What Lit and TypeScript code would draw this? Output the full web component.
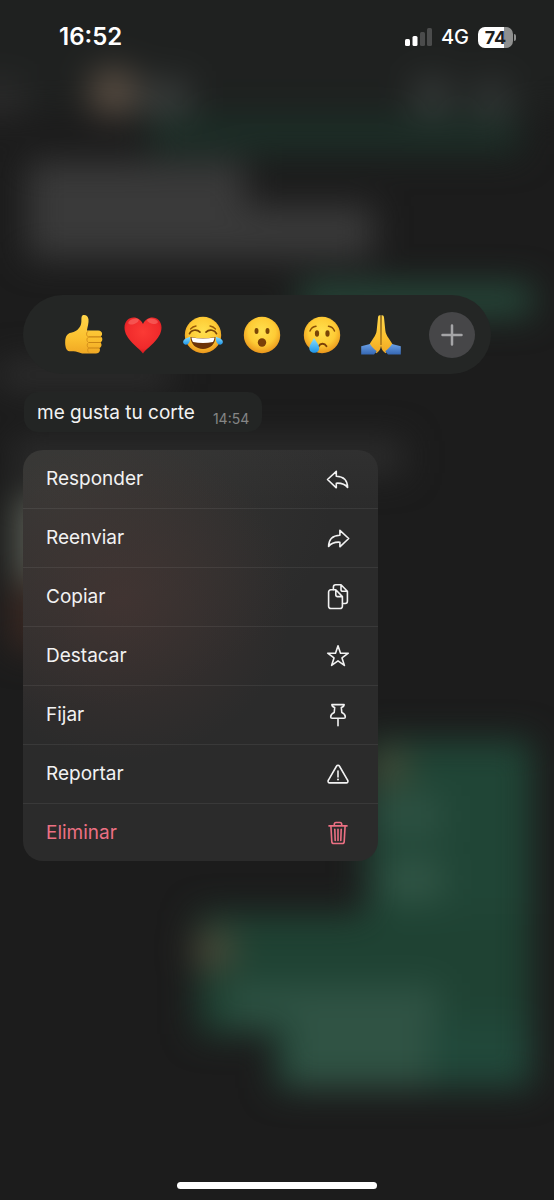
import { LitElement, html, svg, css } from "lit";
import { customElement } from "lit/decorators.js";

const reactions = [
  {
    label: "Me gusta",
    art: svg`
      <path d="M18.800.2c2.600-.8 5.300.8 5.700 4 .4 3.600-1 7.800-1.600 11.400h11.300c2.300 0 3.900 1.300 3.900 3.200 0 1.300-.6 2.200-1.500 2.800 1.200.6 1.800 1.600 1.700 2.900-.1 1.400-.8 2.400-2 3 .9.700 1.300 1.600 1.200 2.700-.2 1.400-1 2.400-2.300 2.900.7.700.9 1.500.7 2.500-.4 1.800-1.900 2.900-4 2.900H20c-2.600 0-4.300-.8-6.500-1.600-2.200-.8-5-.3-8-.7C2 36 .9 31 1.200 26c.3-4.400 2-7.600 5.800-8.200 3.800-.6 6-2.200 8.200-5 2-2.600 2.200-5 2.200-8.400 0-2.200.3-3.800 1.400-4.200z" fill="url(#skin)"/>
      <path d="M25 21.900h11.500M25 27.500h11.500M25 33h10" stroke="#c98414" stroke-width="1.200" stroke-linecap="round" fill="none"/>
      <path d="M24.300 16.200c-2.200.8-2.400 4.800.2 5.800-2 1.200-2.100 4.400 0 5.500-1.900 1.300-1.700 4.400.2 5.500-1.500 1-1.300 3.400.3 4.600" stroke="#d6901c" stroke-width="1" fill="none"/>`,
  },
  {
    label: "Me encanta",
    art: svg`
      <path d="M20 38.500C16.500 33 1.500 24.500 1.500 12.500 1.500 6.500 5.500 2.500 10.500 2.500c4.200 0 7.600 2.400 9.500 6.500 1.900-4.100 5.300-6.500 9.500-6.500 5 0 9 4 9 10C38.500 24.500 23.500 33 20 38.500z" fill="url(#heart)"/>
      <ellipse cx="10.500" cy="6.500" rx="5.500" ry="2.500" fill="#ff9a92" opacity=".35" transform="rotate(-18 10.500 6.500)"/>
      <ellipse cx="29.500" cy="6.200" rx="5.500" ry="2.500" fill="#ff9a92" opacity=".35" transform="rotate(12 29.500 6.200)"/>`,
  },
  {
    label: "Me divierte",
    art: svg`
      <circle cx="20" cy="20" r="18.200" fill="url(#face)"/>
      <path d="M6.500 18.700c1.500-3.600 7-5.200 10.500-1.500M23 17.200c3.500-3.700 9-2.100 10.500 1.500" fill="none" stroke="#7a4506" stroke-width="1.700" stroke-linecap="round"/>
      <path d="M7.500 14c1.500-1.700 3.300-2.700 5.500-3M27 11c2.200.3 4 1.300 5.500 3" fill="none" stroke="#9a5c0b" stroke-width="1.300" stroke-linecap="round"/>
      <path d="M7.500 22c8 1.600 17 1.600 25 0C32.500 29 27 34 20 34S7.500 29 7.500 22z" fill="#6b3308"/>
      <path d="M8.500 22.500c7.500 1.400 15.500 1.400 23 0-.2 2-.7 3.300-1.500 4.500-6.500 1.200-13.500 1.200-20 0-.8-1.200-1.300-2.500-1.500-4.500z" fill="#fff"/>
      <path d="M7 21.800c.8 4.500-1.200 8-4.200 7.900-2.600-.1-3.500-3-1.700-4.900C2.500 23.300 5 22.800 7 21.800zM33 21.800c-.8 4.500 1.200 8 4.200 7.900 2.600-.1 3.500-3 1.700-4.900-1.400-1.500-3.900-2-5.900-3z" fill="url(#tear)"/>`,
  },
  {
    label: "Me asombra",
    art: svg`
      <circle cx="20" cy="20" r="18.200" fill="url(#face)"/>
      <ellipse cx="14.500" cy="16" rx="2" ry="3" fill="#7a4506"/>
      <ellipse cx="25.500" cy="16" rx="2" ry="3" fill="#7a4506"/>
      <ellipse cx="20" cy="27.500" rx="4.200" ry="4.200" fill="#7a3f08"/>`,
  },
  {
    label: "Me entristece",
    art: svg`
      <circle cx="20" cy="20" r="18.200" fill="url(#face)"/>
      <ellipse cx="15" cy="18.500" rx="2.100" ry="3.200" fill="#7a4506"/>
      <ellipse cx="25.500" cy="18.500" rx="2.100" ry="3.200" fill="#7a4506"/>
      <path d="M8 16c1-2.500 3-4.300 6-4.700M26.500 11.300c3 .4 5 2.200 6 4.700" fill="none" stroke="#8a4f08" stroke-width="1.500" stroke-linecap="round"/>
      <path d="M16.500 31.500c2-3.600 6-3.600 8-.3" fill="none" stroke="#7a3f08" stroke-width="1.800" stroke-linecap="round"/>
      <path d="M12 23c2.300 3.700 5.200 7 5.200 10.200 0 2.700-2.200 4.600-4.900 4.600-2.800 0-5-1.900-5-4.600 0-3.200 3-6.500 4.700-10.200z" fill="url(#tear)"/>`,
  },
  {
    label: "Gracias",
    art: svg`
      <path d="M19.600.5c-1.500-.5-2.400.3-2.600 2l-1.300 12.700c-.3 3-1.500 5.300-3.200 7.800L8 30l7.500 8.200c2.500-1.700 4.100-4 4.500-7.500z" fill="url(#skin)"/>
      <path d="M20.400.5c1.500-.5 2.400.3 2.600 2l1.300 12.700c.3 3 1.500 5.300 3.200 7.800L32 30l-7.500 8.200c-2.500-1.700-4.100-4-4.500-7.500z" fill="url(#skin)"/>
      <path d="M20 1v29" stroke="#8a5a10" stroke-width="1"/>
      <path d="M.2 31.300L9 29c1.700 2.600 3.800 5 6.800 7.300L13 39.500H.2zM39.800 31.300L31 29c-1.700 2.600-3.800 5-6.800 7.300l2.800 3.200h12.800z" fill="url(#sleeve)"/>`,
  },
];

const actions = [
  {
    text: "Responder",
    icon: svg`<path d="M1.500 12.500L10.300 4.300v4.900c6.700.2 11.200 4 11.300 11.300-2.700-3.500-6-4.600-11.300-4.300v4.600z"/>`,
  },
  {
    text: "Reenviar",
    icon: svg`<path d="M22.700 12.500L13.900 4.300v4.900C7.200 9.400 2.700 13.200 2.600 20.500c2.700-3.500 6-4.600 11.300-4.300v4.600z"/>`,
  },
  {
    text: "Copiar",
    icon: svg`
      <path d="M9.800 4.800H4.800a2.200 2.200 0 0 0-2.200 2.200v14.300a2.200 2.200 0 0 0 2.200 2.200h9.400a2.200 2.200 0 0 0 2.200-2.200V11.600zv5.200a1.600 1.600 0 0 0 1.600 1.600h5"/>
      <path d="M7.400 4.600V2A2.200 2.200 0 0 1 9.600-.2H15l6.400 6.500v10a2.200 2.200 0 0 1-2.200 2.200h-2.600M15 0v4.700a1.600 1.600 0 0 0 1.600 1.600h4.600"/>`,
  },
  {
    text: "Destacar",
    icon: svg`<path d="M12 1.800l2.500 7.400h7.800l-6.300 4.700 2.400 7.500-6.400-4.600-6.400 4.600L8 13.900 1.700 9.200h7.800z"/>`,
  },
  {
    text: "Fijar",
    icon: svg`<path d="M5.900 1.600h12.200c-.1 1.500-1.100 2.400-2.800 2.900l.5 5c2.200 1 3.500 2.300 3.500 4.400 0 .9-.5 1.300-1.400 1.300H6.100c-.9 0-1.400-.4-1.400-1.300 0-2.100 1.300-3.400 3.500-4.400l.5-5C7 4 6 3.100 5.900 1.600zM12 15.400v7.400"/>`,
  },
  {
    text: "Reportar",
    icon: svg`
      <path d="M10.600 4c.6-1.100 2.200-1.100 2.800 0l8.300 14.300c.7 1.100-.1 2.600-1.400 2.600H3.700c-1.300 0-2.100-1.500-1.400-2.600z"/>
      <path d="M12 9v6"/><circle class="dot" cx="12" cy="17.600" r="1"/>`,
  },
  {
    text: "Eliminar",
    danger: true,
    icon: svg`<path d="M3 4.900h18M8.300 4.700V3.200c0-1 .7-1.700 1.700-1.700h4c1 0 1.700.7 1.700 1.700v1.500M4.900 5l.9 15.600c.1 1.200.8 1.900 2 1.900h8.400c1.200 0 1.900-.7 2-1.900L19.100 5M8.800 8.200l.4 11.300M12 8.200v11.300M15.200 8.200l-.4 11.300"/>`,
  },
];

@customElement("chat-backdrop")
class ChatBackdrop extends LitElement {
  static styles = css`
    :host {
      display: block;
      overflow: hidden;
    }
    .canvas {
      display: block;
      width: 100%;
      height: 100%;
    }
  `;

  render() {
    return html`
      <svg class="canvas" viewBox="0 0 554 1200" preserveAspectRatio="none" aria-hidden="true">
        <defs>
          <filter
            id="soft"
            x="-200"
            y="-200"
            width="954"
            height="1600"
            filterUnits="userSpaceOnUse"
            color-interpolation-filters="sRGB"
          >
            <feGaussianBlur stdDeviation="17" />
          </filter>
        </defs>
        <rect width="554" height="1200" fill="#1c1c1c" />
        <g filter="url(#soft)">
          <rect x="-60" y="-60" width="680" height="170" fill="#1f2120" />
          <rect x="150" y="114" width="370" height="40" fill="#1c2e27" />
          <rect x="-30" y="80" width="56" height="36" fill="#2b2b2b" />
          <rect x="140" y="80" width="50" height="36" fill="#393c3b" />
          <circle cx="113" cy="92" r="24" fill="#5e5145" />
          <circle cx="432" cy="97" r="22" fill="#343837" />
          <circle cx="492" cy="100" r="22" fill="#313534" />
          <rect x="28" y="162" width="218" height="96" fill="#3a3a3a" />
          <rect x="28" y="206" width="345" height="52" fill="#3a3a3a" />
          <rect x="300" y="285" width="232" height="30" fill="#274d3d" />
          <rect x="0" y="362" width="170" height="26" fill="#303030" />
          <rect x="14" y="440" width="390" height="34" fill="#2d2d2d" />
          <rect x="16" y="494" width="60" height="88" fill="#5c6057" />
          <rect x="10" y="584" width="60" height="66" fill="#3a2822" />
          <rect x="366" y="740" width="166" height="180" fill="#204536" />
          <circle cx="390" cy="768" r="20" fill="#444a37" />
          <rect x="375" y="796" width="66" height="40" fill="#2e5243" />
          <rect x="385" y="860" width="56" height="40" fill="#325646" />
          <rect x="198" y="914" width="334" height="120" fill="#1f4233" />
          <circle cx="214" cy="950" r="22" fill="#494938" />
          <rect x="230" y="985" width="210" height="40" fill="#2e5243" />
          <rect x="276" y="1020" width="256" height="68" fill="#21483a" />
          <rect x="290" y="1004" width="140" height="84" fill="#305344" />
        </g>
      </svg>
    `;
  }
}

@customElement("status-bar")
class StatusBar extends LitElement {
  static styles = css`
    :host {
      display: flex;
      justify-content: space-between;
      align-items: center;
      height: 74px;
      padding: 0 38px 0 59px;
      color: #fff;
    }
    .clock {
      font-size: 24px;
      line-height: 28px;
      font-weight: 600;
    }
    .right {
      display: flex;
      align-items: center;
      gap: 9px;
    }
    .signal {
      display: block;
      width: 28px;
      height: 20px;
    }
    .network {
      font-size: 20px;
      line-height: 24px;
      font-weight: 500;
    }
    .battery {
      display: flex;
      align-items: center;
      gap: 1px;
    }
    .cell {
      width: 35px;
      height: 21px;
      border-radius: 7px;
      font-size: 18px;
      line-height: 21px;
      font-weight: 700;
      text-align: center;
      color: #1e2020;
      background: linear-gradient(90deg, #fff 74%, #8f908f 74%);
    }
    .nub {
      width: 2px;
      height: 7px;
      border-radius: 0 2px 2px 0;
      background: #8f908f;
    }
  `;

  render() {
    return html`
      <time class="clock">16:52</time>
      <div class="right">
        <svg class="signal" viewBox="0 0 28 20" aria-hidden="true">
          <rect x="1" y="12" width="5" height="7" rx="1.500" fill="#fff" />
          <rect x="8.500" y="9" width="5" height="10" rx="1.500" fill="#fff" />
          <rect x="16" y="5" width="5" height="14" rx="1.500" fill="#4b4c4c" />
          <rect x="23" y="1" width="5" height="18" rx="1.500" fill="#4b4c4c" />
        </svg>
        <span class="network">4G</span>
        <div class="battery">
          <div class="cell">74</div>
          <div class="nub"></div>
        </div>
      </div>
    `;
  }
}

@customElement("reaction-bar")
class ReactionBar extends LitElement {
  static styles = css`
    :host {
      display: flex;
      align-items: center;
      gap: 28px;
      height: 79px;
      box-sizing: border-box;
      padding: 0 16px 0 41px;
      border-radius: 40px;
      background: #242625;
    }
    .list {
      flex: 1;
      display: flex;
      justify-content: space-between;
    }
    button {
      border: 0;
      padding: 0;
      background: none;
      cursor: pointer;
    }
    .emoji {
      width: 40px;
      height: 40px;
    }
    .emoji svg {
      display: block;
      width: 40px;
      height: 40px;
      overflow: visible;
    }
    .more {
      display: grid;
      place-items: center;
      width: 46px;
      height: 46px;
      border-radius: 50%;
      background: #464648;
    }
    .more svg {
      display: block;
      width: 22px;
      height: 22px;
      stroke: #a5a5a7;
      stroke-width: 2.500;
      stroke-linecap: round;
    }
  `;

  render() {
    return html`
      <div class="list">
        ${reactions.map(
          (r) => html`
            <button class="emoji" aria-label=${r.label}>
              <svg viewBox="0 0 40 40" aria-hidden="true">
                <defs>
                  <linearGradient id="skin" x1="0" y1="0" x2="0" y2="1">
                    <stop offset="0" stop-color="#ffd54a" />
                    <stop offset=".6" stop-color="#fbc02f" />
                    <stop offset="1" stop-color="#f0a824" />
                  </linearGradient>
                  <radialGradient id="face" cx=".5" cy=".4" r=".62">
                    <stop offset="0" stop-color="#ffe04f" />
                    <stop offset=".6" stop-color="#fecb35" />
                    <stop offset="1" stop-color="#e8911a" />
                  </radialGradient>
                  <radialGradient id="heart" cx=".5" cy=".4" r=".65">
                    <stop offset="0" stop-color="#fb3a35" />
                    <stop offset=".7" stop-color="#f02a2b" />
                    <stop offset="1" stop-color="#c9131c" />
                  </radialGradient>
                  <linearGradient id="tear" x1="0" y1="0" x2="0" y2="1">
                    <stop offset="0" stop-color="#8be0ff" />
                    <stop offset="1" stop-color="#1d94e8" />
                  </linearGradient>
                  <linearGradient id="sleeve" x1="0" y1="0" x2="0" y2="1">
                    <stop offset="0" stop-color="#6aa0e6" />
                    <stop offset="1" stop-color="#3567b3" />
                  </linearGradient>
                </defs>
                ${r.art}
              </svg>
            </button>
          `
        )}
      </div>
      <button class="more" aria-label="Más reacciones">
        <svg viewBox="0 0 22 22" aria-hidden="true"><path d="M11 1.500v19M1.500 11h19" /></svg>
      </button>
    `;
  }
}

@customElement("message-bubble")
class MessageBubble extends LitElement {
  static styles = css`
    :host {
      display: flex;
      align-items: flex-end;
      gap: 18px;
      height: 40px;
      box-sizing: border-box;
      padding: 0 13px 4px;
      border-radius: 14px;
      background: #232524;
    }
    .text {
      font-size: 19px;
      line-height: 30px;
      color: #f2f2f2;
    }
    .time {
      font-size: 14px;
      line-height: 18px;
      color: #858686;
    }
  `;

  render() {
    return html`<span class="text">me gusta tu corte</span><time class="time">14:54</time>`;
  }
}

@customElement("action-menu")
class ActionMenu extends LitElement {
  static styles = css`
    :host {
      display: block;
      overflow: hidden;
      border-radius: 20px;
      background:
        radial-gradient(170px 160px at 100px 150px, rgba(74, 54, 51, 0.6), rgba(74, 54, 51, 0) 100%),
        radial-gradient(280px 220px at 30px 40px, rgba(62, 61, 58, 0.7), rgba(62, 61, 58, 0) 100%),
        linear-gradient(180deg, #303030 0, #2b2b2b 60px, #2b2b2b 100%);
    }
    .row {
      display: flex;
      align-items: center;
      justify-content: space-between;
      width: 100%;
      height: 59px;
      box-sizing: border-box;
      margin: 0;
      padding: 0 28px 0 23px;
      border: 0;
      border-bottom: 1px solid rgba(255, 255, 255, 0.07);
      background: none;
      font: inherit;
      font-size: 19px;
      line-height: 28px;
      text-align: left;
      color: #f2f2f2;
      cursor: pointer;
    }
    .row:last-child {
      height: 57px;
      border-bottom: 0;
    }
    .row.danger {
      color: #ec7083;
    }
    .icon {
      display: block;
      width: 24px;
      height: 24px;
      overflow: visible;
      fill: none;
      stroke: currentColor;
      stroke-width: 1.600;
      stroke-linecap: round;
      stroke-linejoin: round;
    }
    .dot {
      fill: currentColor;
      stroke: none;
    }
  `;

  render() {
    return actions.map(
      (a) => html`
        <button class="row ${a.danger ? "danger" : ""}" role="menuitem">
          <span>${a.text}</span>
          <svg class="icon" viewBox="0 0 24 24" aria-hidden="true">${a.icon}</svg>
        </button>
      `
    );
  }
}

@customElement("app-root")
class AppRoot extends LitElement {
  static styles = css`
    :host {
      display: flex;
      flex-direction: column;
      position: relative;
      min-height: 100vh;
      background: #1c1c1c;
      font-family: Inter, "Liberation Sans", sans-serif;
    }
    .backdrop {
      position: absolute;
      inset: 0;
    }
    .status,
    .focus,
    .home {
      position: relative;
    }
    .focus {
      flex: 1;
      display: flex;
      flex-direction: column;
      align-items: flex-start;
      padding: 221px 63px 40px 23px;
    }
    .reactions {
      align-self: stretch;
      max-width: 520px;
    }
    .bubble {
      margin: 18px 0 18px 1px;
    }
    .menu {
      width: 355px;
      max-width: 100%;
    }
    .home {
      align-self: center;
      width: 36%;
      height: 7px;
      margin-bottom: 11px;
      border-radius: 4px;
      background: #fff;
    }
  `;

  render() {
    return html`
      <chat-backdrop class="backdrop"></chat-backdrop>
      <status-bar class="status"></status-bar>
      <main class="focus">
        <reaction-bar class="reactions"></reaction-bar>
        <message-bubble class="bubble"></message-bubble>
        <action-menu class="menu" role="menu"></action-menu>
      </main>
      <div class="home"></div>
    `;
  }
}
